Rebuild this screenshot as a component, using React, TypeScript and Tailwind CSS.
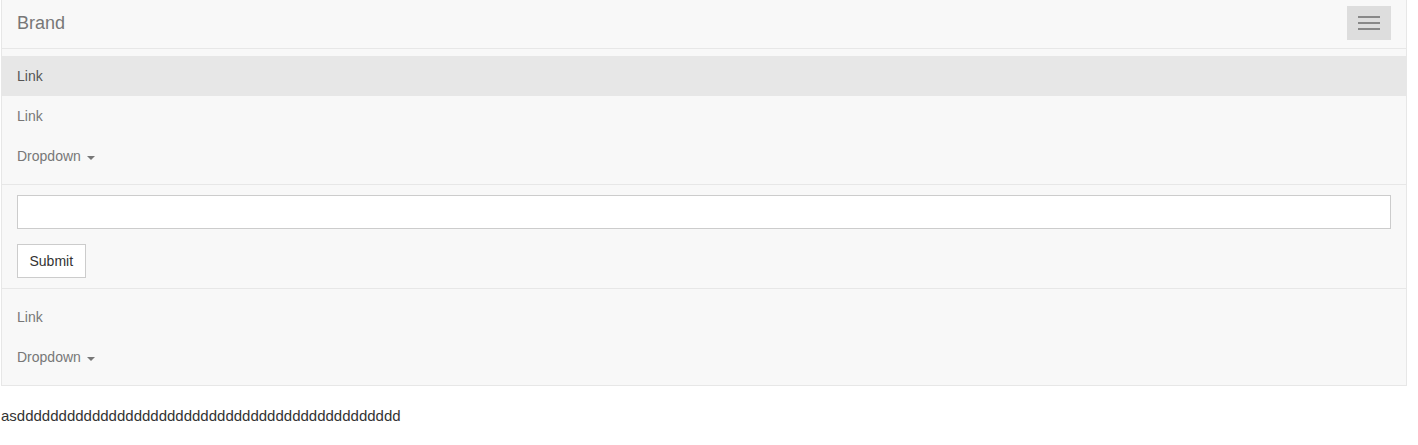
export default function App() {
  return (
    <div className="min-h-[445px] bg-white font-['Liberation_Sans',Arial,sans-serif] text-[14px] leading-5 text-[#333]">
      <nav className="ml-px w-[1406px] border-x border-b border-[#e7e7e7] bg-[#f8f8f8]">
        <div className="flex h-12 items-start justify-between px-[15px]">
          <a className="pt-[13px] text-[18px] leading-5 text-[#777]">Brand</a>
          <button
            type="button"
            className="mt-[6px] flex h-[34px] w-11 flex-col items-center justify-center gap-1 border border-[#ddd] bg-[#ddd]"
          >
            <span className="block h-0.5 w-[22px] bg-[#888]" />
            <span className="block h-0.5 w-[22px] bg-[#888]" />
            <span className="block h-0.5 w-[22px] bg-[#888]" />
          </button>
        </div>

        <div className="border-t border-[#e7e7e7]">
          <ul className="pt-[7px] pb-2">
            <li className="bg-[#e7e7e7] px-[15px] py-2.5 text-[#555]">Link</li>
            <li className="px-[15px] py-2.5 text-[#777]">Link</li>
            <Dropdown />
          </ul>

          <form className="flex flex-col items-start gap-[15px] border-y border-[#e7e7e7] px-[15px] py-2.5">
            <input
              type="text"
              className="h-[34px] w-full border border-[#ccc] bg-white px-3 text-[14px] text-[#555] outline-none"
            />
            <button
              type="button"
              className="h-[34px] border border-[#ccc] bg-white px-[11.5px] text-[14px] text-[#333]"
            >
              Submit
            </button>
          </form>

          <ul className="pt-2 pb-2">
            <li className="px-[15px] py-2.5 text-[#777]">Link</li>
            <Dropdown />
          </ul>
        </div>
      </nav>

      <p className="mt-5 ml-px text-[15px]">asdddddddddddddddddddddddddddddddddddddddddddddd</p>
    </div>
  );
}

function Dropdown() {
  return (
    <li className="flex items-center px-[15px] py-2.5 text-[#777]">
      Dropdown
      <span className="ml-[6px] mt-1 inline-block h-0 w-0 border-x-4 border-t-4 border-x-transparent border-t-[#777]" />
    </li>
  );
}
